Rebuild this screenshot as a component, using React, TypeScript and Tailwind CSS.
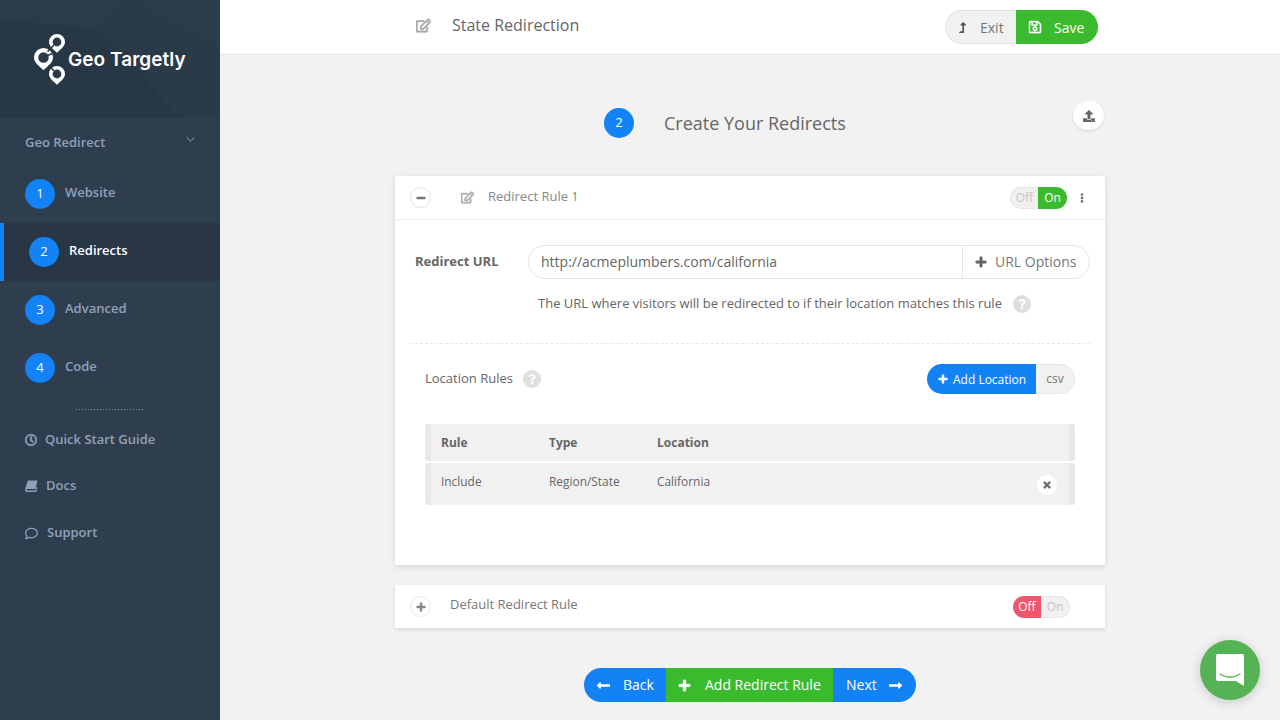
import React from "react";
import {
  FaRegEdit, FaPlus, FaMinus, FaTimes, FaLongArrowAltLeft, FaLongArrowAltRight, FaLevelUpAlt,
  FaRegSave, FaUpload, FaQuestion, FaRegClock, FaRegComment, FaEllipsisV,
} from "react-icons/fa";

const BG = "#2a3a49";

function Pin({ cx, cy, r }: { cx: number; cy: number; r: number }) {
  return (
    <g>
      <path
        d={`M${cx - r} ${cy} A${r} ${r} 0 1 1 ${cx + r} ${cy} C${cx + r} ${cy + r * 0.6} ${cx + r * 0.3} ${cy + r * 1.0} ${cx} ${cy + r * 1.35} C${cx - r * 0.3} ${cy + r * 1.0} ${cx - r} ${cy + r * 0.6} ${cx - r} ${cy} Z`}
        fill="#fff"
      />
      <circle cx={cx} cy={cy} r={r * 0.55} fill={BG} />
    </g>
  );
}

function Logo() {
  return (
    <svg width="34" height="52" viewBox="0 0 34 52" className="shrink-0">
      <Pin cx={23} cy={9} r={8} />
      <Pin cx={9.5} cy={24.5} r={9.5} />
      <Pin cx={23} cy={41} r={8} />
      <path d="M20 12 L13.5 18.5" stroke={BG} strokeWidth="1.6" />
      <path d="M12 23 L20 20" stroke={BG} strokeWidth="1.6" />
      <path d="M20 38 L15 32" stroke={BG} strokeWidth="1.6" />
    </svg>
  );
}

function BookIcon() {
  return (
    <svg width="13" height="12" viewBox="0 0 13 12" className="shrink-0">
      <path d="M3 0.5 H12.5 L10.5 9 H2.2 C1.4 9 1.4 10.6 2.2 10.6 H10.6 L11.6 7 L12.6 7.5 L11.2 12 H1.8 C0 12 -0.2 10 0.4 8 Z" fill="currentColor" />
    </svg>
  );
}

function NavStep({ n, label, active }: { n: number; label: string; active?: boolean }) {
  return (
    <div className={active ? "h-[58px] flex items-center bg-[#283645] border-l-4 border-[#1282f5] pl-[25px]" : "h-[58px] flex items-center pl-[25px]"}>
      <span className="w-[30px] h-[30px] rounded-full bg-[#1282f5] text-white text-[13px] flex items-center justify-center">{n}</span>
      <span className={active ? "ml-[10px] -mt-[2px] text-[13px] font-semibold text-white" : "ml-[10px] -mt-[2px] text-[13px] font-semibold text-[#8fa1b8]"}>{label}</span>
    </div>
  );
}

function Help() {
  return (
    <span className="w-[18px] h-[18px] rounded-full bg-[#dfdfdf] flex items-center justify-center text-white shrink-0">
      <FaQuestion size={10} />
    </span>
  );
}

const heavy = { stroke: "currentColor", strokeWidth: 30 };
const medium = { stroke: "currentColor", strokeWidth: 10 };

export default function App() {
  return (
    <div className="w-[1280px] h-[720px] flex overflow-hidden bg-[#f2f2f2] relative text-[#666]" style={{ fontFamily: '"Open Sans", sans-serif' }}>
      <aside className="w-[220px] h-full bg-[#2f3e4e] shrink-0 flex flex-col">
        <div className="h-[118px] bg-[#2a3a49] relative flex items-center pl-[34px] pb-[1px] overflow-hidden">
          <svg className="absolute inset-0" width="220" height="118" viewBox="0 0 220 118">
            <polygon points="0,20 100,30 180,118 0,118" fill="#273745" />
            <polygon points="100,30 125,0 220,0 220,118 180,118" fill="#2a3a49" />
            <polygon points="100,25 125,0 0,0 0,20" fill="#2b3b4a" />
            <polygon points="130,0 220,0 220,50" fill="#2b3b4b" />
          </svg>
          <div className="relative flex items-center">
            <Logo />
            <span className="text-white text-[19px] font-semibold leading-none mt-[2px] tracking-[0.05px]" style={{ fontFamily: "Inter, sans-serif" }}>Geo Targetly</span>
          </div>
        </div>
        <div className="h-[47px] flex items-center justify-between pl-[25px] pr-[25px] pt-[3px] text-[13px] font-semibold text-[#8fa1b8]">
          <span>Geo Redirect</span>
          <svg width="9" height="5" viewBox="0 0 9 5" className="-mt-[7px]">
            <path d="M0.7 0.7 L4.5 4.2 L8.3 0.7" fill="none" stroke="currentColor" strokeWidth="1" />
          </svg>
        </div>
        <NavStep n={1} label="Website" />
        <NavStep n={2} label="Redirects" active />
        <NavStep n={3} label="Advanced" />
        <NavStep n={4} label="Code" />
        <div className="ml-[76px] w-[68px] h-[1px] bg-[repeating-linear-gradient(90deg,#87929c_0,#87929c_1px,transparent_1px,transparent_3px)] mt-[12px]" />
        <div className="mt-[20px] pl-[25px] flex flex-col text-[13px] font-semibold text-[#8fa1b8]">
          <div className="h-[20px] flex items-center gap-[8px]"><FaRegClock size={12} style={heavy} /><span>Quick Start Guide</span></div>
          <div className="h-[20px] mt-[26px] flex items-center gap-[8px]"><BookIcon /><span>Docs</span></div>
          <div className="h-[20px] mt-[27px] flex items-center gap-[9px]"><FaRegComment size={13} /><span>Support</span></div>
        </div>
      </aside>

      <main className="flex-1 flex flex-col">
        <header className="h-[55px] bg-white border-b border-[#e6e6e6] shrink-0">
          <div className="w-[710px] mx-auto h-full flex items-center">
            <FaRegEdit size={15} style={heavy} className="ml-[21px] text-[#aaa] -mt-[3px]" />
            <span className="ml-[21px] text-[16px] -mt-[5px] text-[#666]">State Redirection</span>
            <div className="ml-auto mr-[7px] flex h-[34px] text-[14px]">
              <span className="w-[71px] rounded-l-full bg-[#f1f1f1] border border-r-0 border-[#e2e2e2] flex items-center pl-[11px] gap-[12px] text-[#777]">
                <FaLevelUpAlt size={11} className="text-[#555]" />Exit
              </span>
              <span className="w-[82px] rounded-r-full bg-[#3abb2e] text-white flex items-center pl-[12px] gap-[12px]">
                <FaRegSave size={14} style={medium} />Save
              </span>
            </div>
          </div>
        </header>

        <div className="w-[710px] mx-auto flex flex-col">
          <div className="h-[121px] flex items-start pl-[209px]">
            <div className="mt-[53px] flex items-center">
              <span className="w-[30px] h-[30px] rounded-full bg-[#1282f5] text-white text-[13px] flex items-center justify-center">2</span>
              <span className="ml-[30px] text-[18px] text-[#666]">Create Your Redirects</span>
            </div>
            <span className="ml-auto mr-[1px] mt-[46px] w-[31px] h-[29px] rounded-full bg-white flex items-center justify-center text-[#666] shadow-sm">
              <FaUpload size={12} />
            </span>
          </div>

          <section className="h-[389px] bg-white rounded-[2px] shadow-[0_2px_6px_rgba(0,0,0,0.12)] flex flex-col">
            <div className="h-[44px] border-b border-[#eeeeee] flex items-center pl-[15px] pr-[18px] shrink-0">
              <span className="w-[21px] h-[21px] rounded-full border border-[#e2e2e2] flex items-center justify-center text-[#777]"><FaMinus size={10} style={heavy} /></span>
              <FaRegEdit size={13} style={heavy} className="ml-[30px] text-[#aaa] -mt-[1px]" />
              <span className="ml-[14px] text-[13px] -mt-[2px] text-[#888]">Redirect Rule 1</span>
              <div className="ml-auto flex items-center h-[22px] text-[12px]">
                <span className="w-[28px] h-[22px] bg-[#f1f1f1] border border-r-0 border-[#e6e6e6] rounded-l-full flex items-center justify-center text-[#c4c4c4]">Off</span>
                <span className="w-[29px] h-[22px] bg-[#3abb2e] rounded-r-full flex items-center justify-center text-white">On</span>
              </div>
              <FaEllipsisV size={10} className="ml-[10px] text-[#777]" />
            </div>

            <div className="mt-[25px] flex items-center pl-[20px] pr-[15px]">
              <span className="w-[113px] text-[13px] font-bold text-[#666]">Redirect URL</span>
              <div className="flex-1 h-[34px] flex border border-[#e6e6e6] rounded-full text-[14px]">
                <span className="flex-1 pl-[12px] pb-[2px] flex items-center text-[#666]">http://acmeplumbers.com/california</span>
                <span className="w-[127px] border-l border-[#e6e6e6] flex items-center pl-[12px] gap-[8px] text-[#777]">
                  <FaPlus size={12} style={heavy} className="text-[#666]" /><span className="-mt-[2px]">URL Options</span>
                </span>
              </div>
            </div>

            <div className="mt-[14px] pl-[143px] flex items-center text-[13px] text-[#666] h-[21px]">
              <span>The URL where visitors will be redirected to if their location matches this rule</span>
              <span className="ml-[11px]"><Help /></span>
            </div>

            <div className="mt-[29px] mx-[15px] border-t border-dashed border-[#e6e6e6]" />

            <div className="mt-[20px] flex items-center pl-[30px] pr-[30px] h-[30px]">
              <span className="text-[13px] text-[#666]">Location Rules</span>
              <span className="ml-[10px]"><Help /></span>
              <div className="ml-auto flex h-[30px] text-[12px]">
                <span className="w-[109px] bg-[#1282f5] text-white rounded-l-full flex items-center pl-[11px] gap-[5px]"><FaPlus size={10} style={heavy} /><span className="mt-[1px]">Add Location</span></span>
                <span className="w-[39px] bg-[#f1f1f1] border border-l-0 border-[#e6e6e6] rounded-r-full flex items-center justify-center text-[#777]">csv</span>
              </div>
            </div>

            <div className="mt-[30px] mx-[30px] flex flex-col gap-[2px]">
              <div className="h-[37px] bg-[#f1f1f1] border-x-[6px] border-[#e6e8ea] rounded-[3px] flex items-center text-[12px] font-bold text-[#666]">
                <span className="pl-[10px] w-[118px]">Rule</span>
                <span className="w-[108px]">Type</span>
                <span>Location</span>
              </div>
              <div className="h-[42px] bg-[#f1f1f1] border-x-[6px] border-[#e6e8ea] rounded-[3px] flex items-center text-[11.9px] text-[#666]">
                <span className="pl-[10px] w-[118px] -mt-[5px]">Include</span>
                <span className="w-[108px] -mt-[5px]">Region/State</span>
                <span className="-mt-[5px]">California</span>
                <span className="ml-auto mr-[12px] mt-[1px] w-[20px] h-[20px] rounded-full bg-white flex items-center justify-center text-[#666]"><FaTimes size={10} style={heavy} /></span>
              </div>
            </div>
          </section>

          <section className="mt-[20px] h-[43px] bg-white shadow-[0_2px_4px_rgba(0,0,0,0.1)] flex items-center pl-[15px] pr-[35px]">
            <span className="w-[21px] h-[21px] rounded-full border border-[#e6e6e6] flex items-center justify-center text-[#888]"><FaPlus size={10} style={heavy} /></span>
            <span className="ml-[19px] text-[13px] text-[#777] -mt-[3px]">Default Redirect Rule</span>
            <div className="ml-auto flex items-center h-[22px] text-[12px]">
              <span className="w-[28px] h-[22px] bg-[#f0566a] rounded-l-full flex items-center justify-center text-white">Off</span>
              <span className="w-[29px] h-[22px] bg-[#f1f1f1] border border-l-0 border-[#e6e6e6] rounded-r-full flex items-center justify-center text-[#c4c4c4]">On</span>
            </div>
          </section>

          <div className="mt-[40px] flex justify-center h-[34px] text-[14px] text-white">
            <span className="w-[82px] bg-[#1282f5] rounded-l-full flex items-center pl-[12px] gap-[12px]"><FaLongArrowAltLeft size={15} /><span className="-mt-[2px]">Back</span></span>
            <span className="w-[167px] bg-[#3abb2e] flex items-center pl-[12px] gap-[14px]"><FaPlus size={13} style={heavy} /><span className="-mt-[2px]">Add Redirect Rule</span></span>
            <span className="w-[83px] bg-[#1282f5] rounded-r-full flex items-center pl-[13px] gap-[11px]"><span className="-mt-[2px]">Next</span><FaLongArrowAltRight size={15} /></span>
          </div>
        </div>
      </main>

      <div className="absolute left-[1200px] top-[640px] w-[60px] h-[60px] rounded-full bg-[#56b355] shadow-[0_2px_12px_rgba(0,0,0,0.18)] flex items-center justify-center">
        <svg width="28" height="32" viewBox="0 0 28 32">
          <path d="M2 0 H26 A2 2 0 0 1 28 2 V32 L20 27 H2 A2 2 0 0 1 0 25 V2 A2 2 0 0 1 2 0 Z" fill="#fff" />
          <path d="M4 20 Q14 26.5 24 20" fill="none" stroke="#56b355" strokeWidth="1.3" strokeLinecap="round" />
        </svg>
      </div>
    </div>
  );
}
